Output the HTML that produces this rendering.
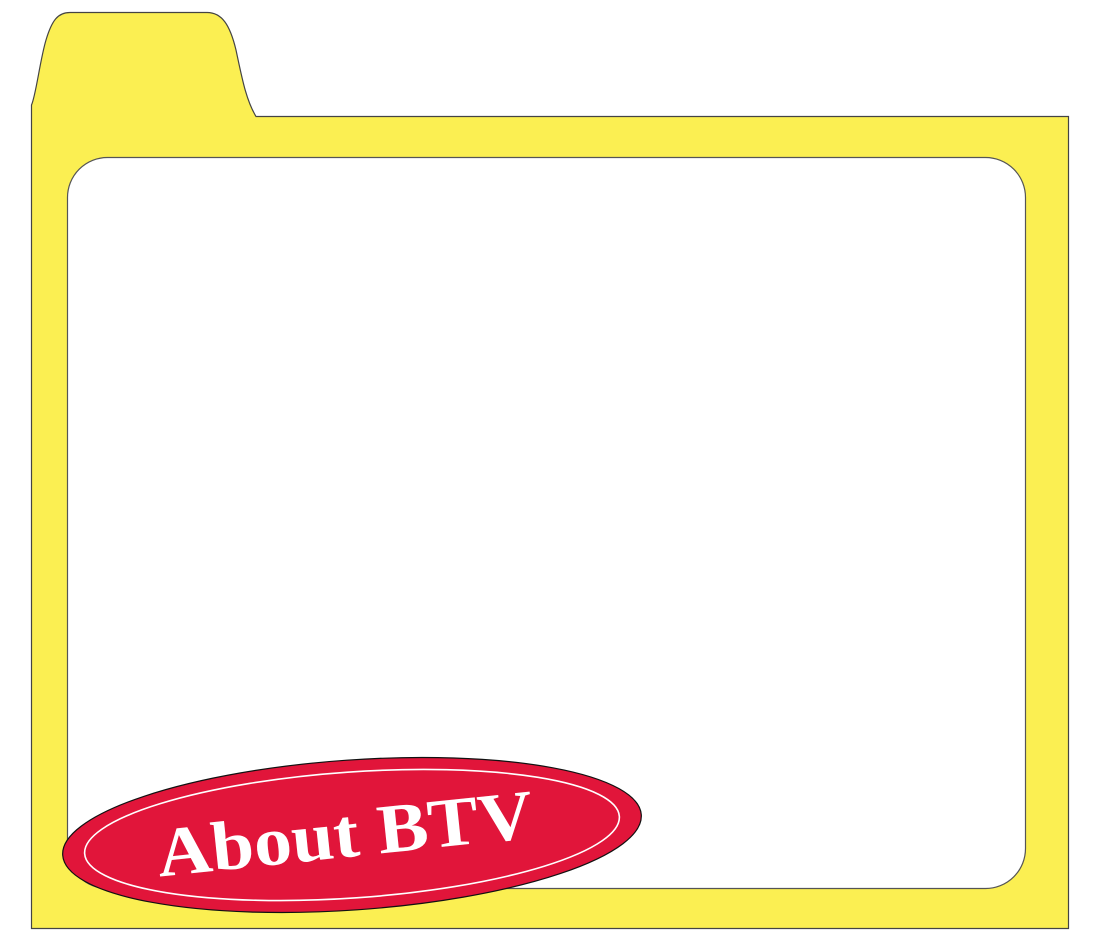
<!DOCTYPE html>
<html><head><meta charset="utf-8"><style>
html,body{margin:0;padding:0;background:#fff;}
svg{display:block;}
</style></head><body>
<svg width="1100" height="943" viewBox="0 0 1100 943" xmlns="http://www.w3.org/2000/svg">
<path d="M31.5 105 C36 95 40 60 46 40 C52 20 58 12.5 70 12.5 L207 12.5 C222 12.5 230 25 236 50 C242 78 246 100 256 116.5 L1068.5 116.5 L1068.5 928.5 L31.5 928.5 Z" fill="#fbef52" stroke="#444" stroke-width="1.2"/>
<rect x="67.5" y="157.5" width="958" height="731" rx="40" ry="40" fill="#fff" stroke="#555" stroke-width="1.2"/>
<g transform="translate(352 835) rotate(-4)">
<ellipse cx="0" cy="0" rx="290" ry="75" fill="#e1153a" stroke="#111" stroke-width="1.2"/>
<ellipse cx="0" cy="0" rx="268" ry="63" fill="none" stroke="#fff" stroke-width="1.6"/>
</g>
<text x="345" y="857" transform="rotate(-6 345 835)" text-anchor="middle" font-family="'Liberation Serif',serif" font-weight="bold" font-size="70" fill="#fff" textLength="378" lengthAdjust="spacingAndGlyphs">About BTV</text>
</svg>
</body></html>
